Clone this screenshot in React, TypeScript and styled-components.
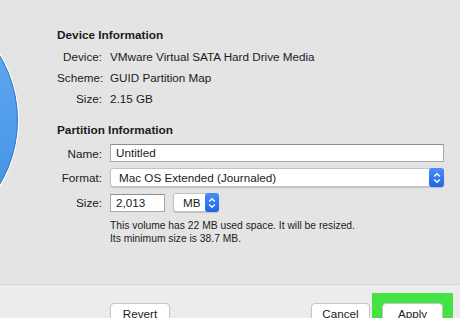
import styled, { createGlobalStyle } from 'styled-components';

const GlobalStyle = createGlobalStyle`
  html, body {
    margin: 0;
    padding: 0;
    width: 460px;
    height: 318px;
    overflow: hidden;
    background: #e4e4e4;
  }
  * {
    box-sizing: border-box;
  }
`;

type TStepper = {
  small?: boolean;
};

type TButton = {
  width: number;
};

function DiskIcon() {
  return (
    <svg width="57" height="285" viewBox="0 0 57 285">
      <defs>
        <linearGradient id="disk" x1="0" y1="0" x2="0" y2="1">
          <stop offset="0" stopColor="#6aaef0" />
          <stop offset="1" stopColor="#3a8de6" />
        </linearGradient>
      </defs>
      <circle cx="-108" cy="120" r="127" fill="#ffffff" />
      <circle cx="-108" cy="120" r="125.5" fill="url(#disk)" stroke="#2f6fc8" strokeWidth="1" />
    </svg>
  );
}

function Stepper({ small }: TStepper) {
  return (
    <StepperBox small={small}>
      <svg width="8" height="12" viewBox="0 0 8 12">
        <path d="M1.2 4.6 L4 1.8 L6.8 4.6" fill="none" stroke="#fff" strokeWidth="1.4" />
        <path d="M1.2 7.4 L4 10.2 L6.8 7.4" fill="none" stroke="#fff" strokeWidth="1.4" />
      </svg>
    </StepperBox>
  );
}

export default function App() {
  return (
    <>
      <GlobalStyle />
      <Window>
        <Content>
          <DiskIcon />
          <Form>
            <Heading>Device Information</Heading>
            <InfoGrid>
              <Label>Device:</Label>
              <Value>VMware Virtual SATA Hard Drive Media</Value>
              <Label>Scheme:</Label>
              <Value>GUID Partition Map</Value>
              <Label>Size:</Label>
              <Value>2.15 GB</Value>
            </InfoGrid>
            <Heading $top={14}>Partition Information</Heading>
            <FieldGrid>
              <Label>Name:</Label>
              <TextField>Untitled</TextField>
              <Label>Format:</Label>
              <Popup>
                <PopupText>Mac OS Extended (Journaled)</PopupText>
                <Stepper />
              </Popup>
              <Label>Size:</Label>
              <SizeRow>
                <TextField $width={55}>2,013</TextField>
                <UnitPopup>
                  <PopupText>MB</PopupText>
                  <Stepper small />
                </UnitPopup>
              </SizeRow>
              <span />
              <Note>
                This volume has 22 MB used space. It will be resized.
                <br />
                Its minimum size is 38.7 MB.
              </Note>
            </FieldGrid>
          </Form>
        </Content>
        <Footer>
          <Button width={60}>Revert</Button>
          <Spacer />
          <Button width={59}>Cancel</Button>
          <Highlight>
            <Button width={61}>Apply</Button>
          </Highlight>
        </Footer>
      </Window>
    </>
  );
}

const Window = styled.div`
  display: flex;
  flex-direction: column;
  width: 460px;
  height: 318px;
  font-family: 'Liberation Sans', Arial, sans-serif;
  color: #1b1b1b;
  background: #e4e4e4;
`;

const Content = styled.div`
  display: flex;
  height: 285px;
  border-bottom: 1px solid #d4d4d4;
`;

const Form = styled.div`
  flex: 1;
  display: flex;
  flex-direction: column;
  padding: 28px 16px 0 0;
`;

const Heading = styled.div<{ $top?: number }>`
  height: 14px;
  line-height: 14px;
  font-size: 11.8px;
  font-weight: 700;
  margin-top: ${({ $top }) => $top ?? 0}px;
`;

const InfoGrid = styled.div`
  display: grid;
  grid-template-columns: 45px 1fr;
  column-gap: 8px;
  grid-auto-rows: 21px;
  align-items: center;
  margin-top: 4px;
`;

const Label = styled.span`
  font-size: 11.7px;
  text-align: right;
  white-space: nowrap;
`;

const Value = styled.span`
  font-size: 11.7px;
  white-space: nowrap;
`;

const FieldGrid = styled.div`
  display: grid;
  grid-template-columns: 45px 1fr;
  column-gap: 8px;
  row-gap: 6px;
  align-items: center;
  margin-top: 7px;
`;

const TextField = styled.div<{ $width?: number }>`
  width: ${({ $width }) => ($width ? `${$width}px` : '100%')};
  height: 18px;
  padding: 0 5px;
  line-height: 16px;
  font-size: 11.7px;
  background: #ffffff;
  border: 1px solid #a9a9a9;
  border-top-color: #8e8e8e;
`;

const Popup = styled.div`
  display: flex;
  align-items: center;
  height: 19px;
  background: #ffffff;
  border: 1px solid #c2c2c2;
  border-radius: 3px;
  box-shadow: 0 1px 1px rgba(0, 0, 0, 0.15);
  padding-left: 8px;
`;

const PopupText = styled.span`
  flex: 1;
  font-size: 11.7px;
  white-space: nowrap;
`;

const StepperBox = styled.span<TStepper>`
  display: flex;
  align-items: center;
  justify-content: center;
  width: ${({ small }) => (small ? 14 : 15)}px;
  height: calc(100% + 2px);
  margin-right: -1px;
  border-radius: 3px;
  background: linear-gradient(#4a8ef8, #1f66e5);
`;

const SizeRow = styled.div`
  display: flex;
  align-items: center;
  gap: 8px;
`;

const UnitPopup = styled(Popup)`
  width: 46px;
  padding-left: 9px;
`;

const Note = styled.div`
  font-size: 10.3px;
  line-height: 13px;
  margin-top: 1px;
`;

const Footer = styled.div`
  flex: 1;
  display: flex;
  align-items: flex-start;
  padding: 8px 7px 0 110px;
  background: #ececec;
`;

const Spacer = styled.div`
  flex: 1;
`;

const Button = styled.div<TButton>`
  width: ${({ width }) => width}px;
  height: 22px;
  margin-top: 10px;
  line-height: 19px;
  text-align: center;
  font-size: 11.7px;
  background: #ffffff;
  border: 1px solid #c6c6c6;
  border-radius: 4px;
  box-shadow: 0 1px 1px rgba(0, 0, 0, 0.12);
`;

const Highlight = styled.div`
  align-self: stretch;
  margin-left: 2px;
  padding: 0 10px;
  background: #43e343;
`;
